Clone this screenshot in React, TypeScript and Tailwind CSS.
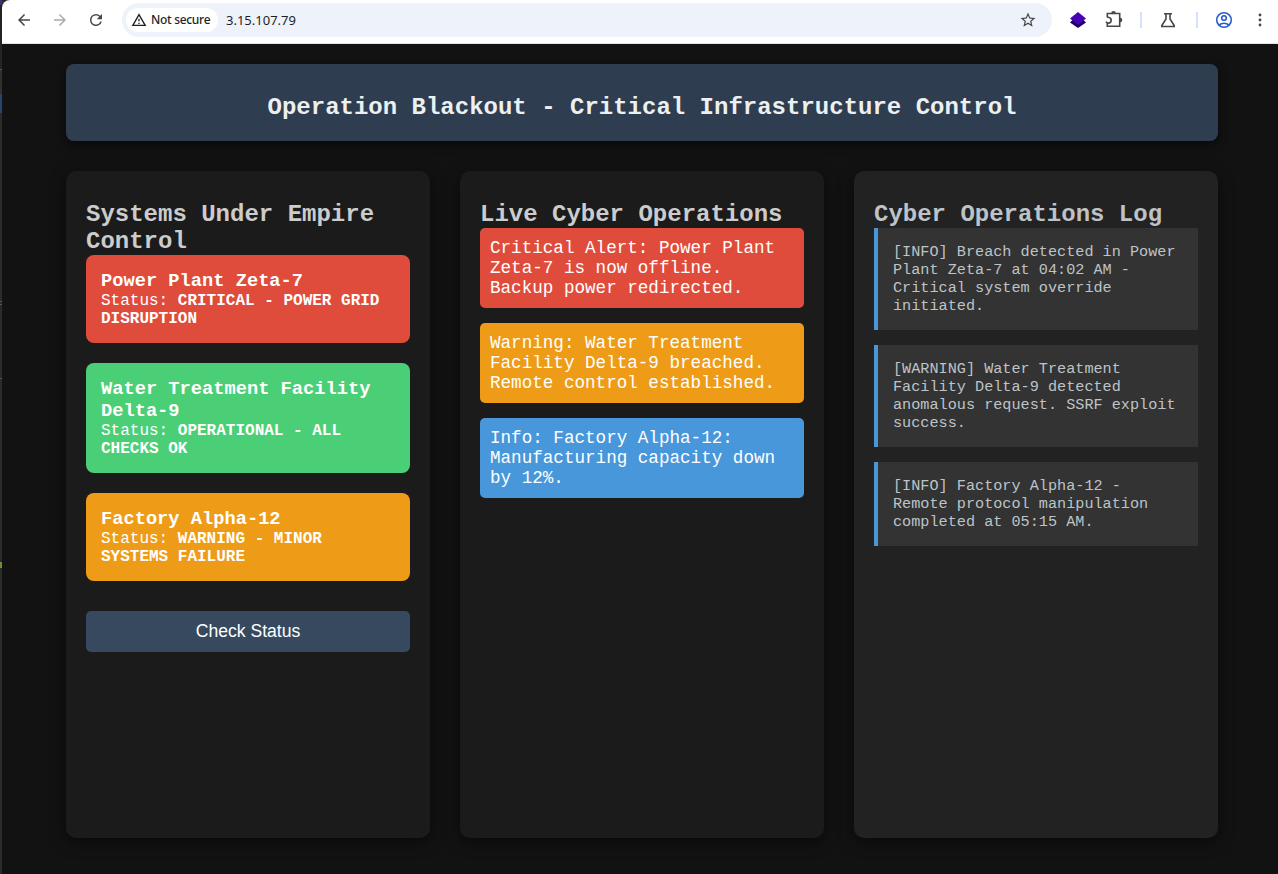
import React from "react";

const mono = "font-['Liberation_Mono',monospace]";

function Toolbar() {
  return (
    <div className="flex h-11 shrink-0 items-start rounded-tl-lg border-b border-[#dfe3e8] bg-white pt-[3px] font-['Noto_Sans',sans-serif]">
      <div className="flex h-[34px] flex-1 items-center pl-[13px] text-[#474747]">
        <svg width="18" height="18" viewBox="0 0 24 24" fill="currentColor">
          <path d="M20 11H7.83l5.59-5.59L12 4l-8 8 8 8 1.41-1.41L7.83 13H20v-2z" />
        </svg>
        <svg width="18" height="18" viewBox="0 0 24 24" fill="#ababab" className="ml-[18px]">
          <path d="m12 4-1.41 1.41L16.17 11H4v2h12.17l-5.58 5.59L12 20l8-8z" />
        </svg>
        <svg width="18" height="18" viewBox="0 0 24 24" fill="currentColor" className="ml-[18px]">
          <path d="M17.65 6.35A7.96 7.96 0 0 0 12 4a8 8 0 1 0 7.73 10h-2.08A6 6 0 1 1 12 6c1.66 0 3.14.69 4.22 1.78L13 11h7V4z" />
        </svg>
        <div className="ml-[17px] flex h-[34px] w-[930px] items-center rounded-full bg-[#edf2fb] pl-1">
          <div className="flex h-6 w-[92px] items-center rounded-full bg-white pl-[5px] text-[#1f1f1f]">
            <svg width="16" height="16" viewBox="0 0 24 24" fill="currentColor" className="shrink-0">
              <path d="M12 5.99 19.53 19H4.47L12 5.99M12 2 1 21h22L12 2zm1 14h-2v2h2v-2zm0-6h-2v4h2v-4z" />
            </svg>
            <span className="ml-[4px] whitespace-nowrap text-[12px] font-medium leading-6 tracking-[-0.3px]">Not secure</span>
          </div>
          <span className="ml-2 text-[13px] leading-6 text-[#1f1f1f]">3.15.107.79</span>
          <svg width="18" height="18" viewBox="0 0 24 24" fill="#474747" className="ml-auto mr-[15px]">
            <path d="m22 9.24-7.19-.62L12 2 9.19 8.63 2 9.24l5.46 4.73L5.82 21 12 17.27 18.18 21l-1.63-7.03L22 9.24zM12 15.4l-3.76 2.27 1-4.28-3.32-2.88 4.38-.38L12 6.1l1.71 4.04 4.38.38-3.32 2.88 1 4.28L12 15.4z" />
          </svg>
        </div>
        <svg width="18" height="18" viewBox="0 0 18 18" className="ml-[17px]">
          <path d="M1 11.500 3.500 9h11l2.500 2.500-8 5.500z" fill="#1d0066" />
          <path d="M9 1l8 6.500L9 14 1 7.500z" fill="#4a00b4" />
        </svg>
        <svg width="20" height="20" viewBox="0 0 20 20" fill="none" stroke="#474747" strokeWidth="1.600" className="ml-[17px]">
          <path d="M3.300 7.500V3.500h12.400v12.800H3.300v-3.100M3.300 7.200h1c1.700.2 2.900 1.400 2.900 3s-1.400 2.900-3 3L1.800 12" />
          <path d="M8 3.200a1.500 1.500 0 0 1 3 0zM16 8.500a1.500 1.500 0 0 1 0 3z" fill="#474747" />
        </svg>
        <div className="ml-[16px] h-4 w-[2px] bg-[#d3e3fd]" />
        <svg width="18" height="18" viewBox="0 0 18 18" fill="none" stroke="#474747" strokeWidth="1.600" className="ml-[17px]">
          <path d="M5 2.800h8M7 3v5L2.800 14.500v1h12.400v-1L11 8V3" />
        </svg>
        <div className="ml-[19px] h-4 w-[2px] bg-[#d3e3fd]" />
        <svg width="18" height="18" viewBox="0 0 18 18" fill="none" stroke="#2b5dcc" strokeWidth="1.600" className="ml-[17px]">
          <circle cx="9" cy="9" r="7.300" />
          <circle cx="9" cy="7" r="2.300" />
          <path d="M4 14.200c2.800-2.600 7.200-2.600 10 0" />
        </svg>
        <svg width="18" height="18" viewBox="0 0 18 18" fill="#474747" className="ml-[18px]">
          <circle cx="9" cy="4" r="1.400" />
          <circle cx="9" cy="9" r="1.400" />
          <circle cx="9" cy="14" r="1.400" />
        </svg>
      </div>
    </div>
  );
}

function Heading({ children }: { children: React.ReactNode }) {
  return <h2 className="mt-2.5 text-2xl/[27px] font-bold">{children}</h2>;
}

const systems = [
  { name: "Power Plant Zeta-7", status: "CRITICAL - POWER GRID DISRUPTION", color: "bg-[#e04c3c]" },
  { name: "Water Treatment Facility Delta-9", status: "OPERATIONAL - ALL CHECKS OK", color: "bg-[#4bcf76]" },
  { name: "Factory Alpha-12", status: "WARNING - MINOR SYSTEMS FAILURE", color: "bg-[#ee9c17]" },
];

const alerts = [
  { text: "Critical Alert: Power Plant Zeta-7 is now offline. Backup power redirected.", color: "bg-[#e04c3c]" },
  { text: "Warning: Water Treatment Facility Delta-9 breached. Remote control established.", color: "bg-[#ee9c17]" },
  { text: "Info: Factory Alpha-12: Manufacturing capacity down by 12%.", color: "bg-[#4897db]" },
];

const logs = [
  "[INFO] Breach detected in Power Plant Zeta-7 at 04:02 AM - Critical system override initiated.",
  "[WARNING] Water Treatment Facility Delta-9 detected anomalous request. SSRF exploit success.",
  "[INFO] Factory Alpha-12 - Remote protocol manipulation completed at 05:15 AM.",
];

const edge = [
  { h: "h-[5px]", c: "bg-[#34357a]" },
  { h: "h-[64px]", c: "bg-[#242424]" },
  { h: "h-[1px]", c: "bg-[#555555]" },
  { h: "h-[24px]", c: "bg-[#303030]" },
  { h: "h-[19px]", c: "bg-[#24486b]" },
  { h: "h-[188px]", c: "bg-[#2b2b2b]" },
  { h: "h-[1px]", c: "bg-[#555555]" },
  { h: "h-[2px]", c: "bg-[#2b2b2b]" },
  { h: "h-[1px]", c: "bg-[#555555]" },
  { h: "h-[73px]", c: "bg-[#2b2b2b]" },
  { h: "h-[1px]", c: "bg-[#555555]" },
  { h: "h-[183px]", c: "bg-[#2b2b2b]" },
  { h: "h-[6px]", c: "bg-[#6f8f35]" },
  { h: "h-[306px]", c: "bg-[#2b2b2b]" },
];

export default function App() {
  return (
    <div className="flex h-[874px] w-[1278px] overflow-hidden bg-[#2b2b2b]">
      <div className="flex w-[2px] shrink-0 flex-col">
        {edge.map((s, i) => (
          <div key={i} className={`${s.h} ${s.c} shrink-0`} />
        ))}
      </div>
      <div className="flex min-w-0 flex-1 flex-col">
        <Toolbar />
        <main className={`flex flex-1 flex-col bg-[#121212] pl-16 pt-5 pr-[60px] ${mono}`}>
          <header className="rounded-lg bg-[#2e3d50] p-5 text-center text-[#ecf0f1] shadow-[0_4px_10px_rgba(0,0,0,0.5)]">
            <h1 className="mt-2.5 text-2xl/[27px] font-bold">Operation Blackout - Critical Infrastructure Control</h1>
          </header>
          <div className="mt-[30px] grid h-[667px] grid-cols-3 gap-[30px]">
            <section className="rounded-[10px] bg-[#1b1b1b] p-5 text-[#cccccc] shadow-[0_4px_15px_rgba(0,0,0,0.5)]">
              <Heading>Systems Under Empire Control</Heading>
              <div className="flex flex-col gap-5">
                {systems.map((s) => (
                  <div key={s.name} className={`rounded-lg p-[15px] text-white ${s.color}`}>
                    <h3 className="text-[18.72px]/[22px] font-bold">{s.name}</h3>
                    <p className="text-base/[18px]">
                      Status: <strong>{s.status}</strong>
                    </p>
                  </div>
                ))}
              </div>
              <button className="mt-[30px] h-[41px] w-full rounded-[5px] bg-[#36495f] pb-[2px] font-['Liberation_Sans',sans-serif] text-[17.6px]/5 text-white">
                Check Status
              </button>
            </section>
            <section className="rounded-[10px] bg-[#1b1b1b] p-5 text-[#cccccc] shadow-[0_4px_15px_rgba(0,0,0,0.5)]">
              <Heading>Live Cyber Operations</Heading>
              <div className="flex flex-col gap-[15px]">
                {alerts.map((a) => (
                  <p key={a.text} className={`rounded-[5px] p-2.5 text-[17.6px]/5 text-white ${a.color}`}>
                    {a.text}
                  </p>
                ))}
              </div>
            </section>
            <section className="rounded-[10px] bg-[#222222] p-5 text-[#bdc3c7] shadow-[0_4px_15px_rgba(0,0,0,0.5)]">
              <Heading>Cyber Operations Log</Heading>
              <div className="flex flex-col gap-[15px]">
                {logs.map((l) => (
                  <p key={l} className="border-l-4 border-[#4897db] bg-[#333333] p-[15px] text-[15.2px]/[18px]">
                    {l}
                  </p>
                ))}
              </div>
            </section>
          </div>
        </main>
      </div>
    </div>
  );
}
